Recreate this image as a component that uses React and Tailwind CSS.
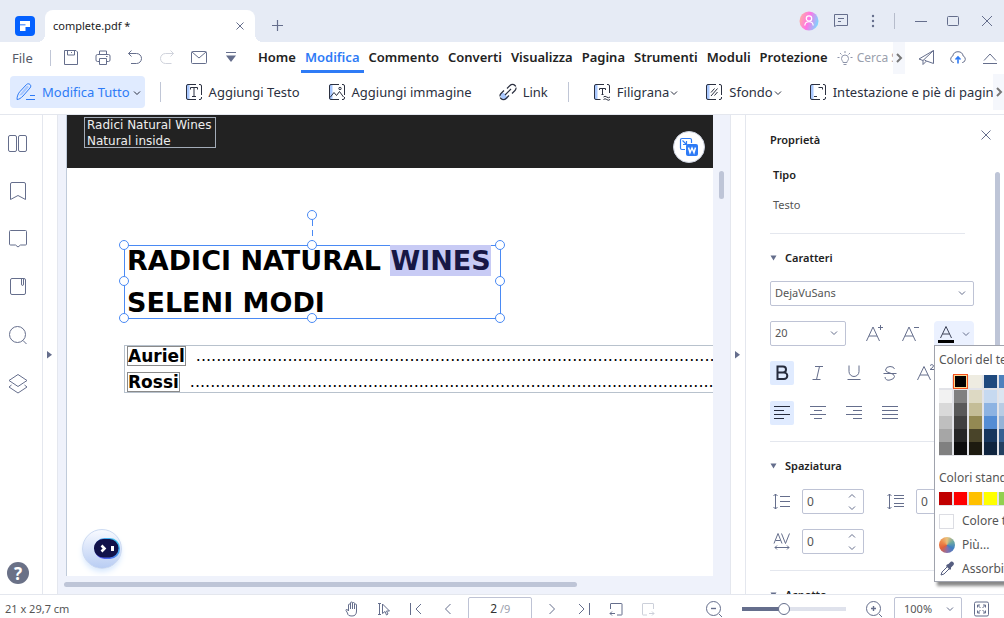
import React from "react";

const TABS = ["Home", "Modifica", "Commento", "Converti", "Visualizza", "Pagina", "Strumenti", "Moduli", "Protezione"];

const THEME_COLORS = [
  ["#ffffff", "#f2f2f2", "#d9d9d9", "#bfbfbf", "#a6a6a6", "#808080"],
  ["#000000", "#808080", "#595959", "#404040", "#262626", "#0d0d0d"],
  ["#eeece1", "#ddd9c3", "#c4bd97", "#938953", "#494429", "#1d1b10"],
  ["#1f497d", "#c6d9f0", "#8db3e2", "#548dd4", "#17365d", "#0f243e"],
  ["#4f81bd", "#dbe5f1", "#b8cce4", "#95b3d7", "#366092", "#244061"],
  ["#c0504d", "#f2dcdb", "#e5b9b7", "#d99694", "#953734", "#632423"],
];

const STANDARD_COLORS = ["#c00000", "#ff0000", "#ffc000", "#ffff00", "#92d050", "#00b050"];

const HANDLES = [
  "-left-[6px] -top-[6px]",
  "left-1/2 -ml-[6px] -top-[6px]",
  "-right-[5px] -top-[6px]",
  "-left-[6px] top-1/2 -mt-[6px]",
  "-right-[5px] top-1/2 -mt-[6px]",
  "-left-[6px] -bottom-[5px]",
  "left-1/2 -ml-[6px] -bottom-[5px]",
  "-right-[5px] -bottom-[5px]",
];

function Icon({ size = 20, children, className = "" }) {
  return (
    <svg
      width={size}
      height={size}
      viewBox={`0 0 ${size} ${size}`}
      fill="none"
      stroke="currentColor"
      strokeWidth="1"
      className={`shrink-0 ${className}`}
      aria-hidden="true"
    >
      {children}
    </svg>
  );
}

function IconButton({ label, className = "", children }) {
  return (
    <button type="button" aria-label={label} className={`flex h-6 w-6 shrink-0 items-center justify-center ${className}`}>
      {children}
    </button>
  );
}

function Chevron({ className = "" }) {
  return (
    <svg width="8" height="8" viewBox="0 0 8 8" fill="none" stroke="currentColor" className={`shrink-0 ${className}`} aria-hidden="true">
      <path d="M1 2.500l3 3 3-3" />
    </svg>
  );
}

function Triangle({ down = false }) {
  return (
    <svg width="7" height="8" viewBox="0 0 7 8" fill="#656e8c" className="shrink-0" aria-hidden="true">
      {down ? <path d="M0.500 1.500h6L3.500 6.500z" /> : <path d="M0 0v7.500L5 3.700z" />}
    </svg>
  );
}

function TitleBar() {
  return (
    <header className="flex h-[42px] shrink-0 items-end bg-[#e6ebf5] text-[#656e8c]">
      <svg width="20" height="20" viewBox="0 0 20 20" className="mb-[6px] ml-[15px] shrink-0" aria-hidden="true">
        <rect width="20" height="20" rx="4" fill="#0461ff" />
        <path d="M5 5h10v6h-4.500v4H5z" fill="#fff" />
        <path d="M5 8h5.500v1.500H5z" fill="#6aa2ff" />
      </svg>
      <div className="relative ml-[10px] flex h-8 w-[210px] items-center rounded-t-lg bg-white pl-2 pr-[10px] before:absolute before:-left-2 before:bottom-0 before:h-2 before:w-2 before:bg-[radial-gradient(circle_at_0_0,#e6ebf5_8px,white_8px)] after:absolute after:-right-2 after:bottom-0 after:h-2 after:w-2 after:bg-[radial-gradient(circle_at_100%_0,#e6ebf5_8px,white_8px)]">
        <span className="flex-1 text-[11px] text-[#222]">complete.pdf *</span>
        <button type="button" aria-label="Chiudi scheda">
          <Icon size={10}><path d="M1.500 1.500l7 7M8.500 1.500l-7 7" /></Icon>
        </button>
      </div>
      <button type="button" aria-label="Nuova scheda" className="mb-[10px] ml-4">
        <Icon size={13}><path d="M6.500 1v11M1 6.500h11" strokeWidth="1.200" /></Icon>
      </button>
      <div className="ml-auto flex h-[42px] items-center">
        <button type="button" aria-label="Account" className="mr-[10px]">
          <svg width="20" height="20" viewBox="0 0 20 20" fill="none">
            <defs>
              <linearGradient id="avatar" x1="0" y1="0.200" x2="1" y2="0.500">
                <stop offset="0" stopColor="#ffb0a0" />
                <stop offset="0.500" stopColor="#ff74e6" />
                <stop offset="1" stopColor="#7fd4ff" />
              </linearGradient>
            </defs>
            <circle cx="10" cy="10" r="9.500" fill="url(#avatar)" />
            <circle cx="10" cy="7.500" r="2.700" stroke="#fff" strokeWidth="1.200" />
            <path d="M5.800 14.500c.3-5 8.100-5 8.400 0" stroke="#fff" strokeWidth="1.200" />
          </svg>
        </button>
        <IconButton label="Messaggi">
          <Icon size={16}>
            <path d="M1.500 13.500v-12h13v11h-11z" strokeLinejoin="round" />
            <path d="M5 5.500h6M5 8.500h3" />
          </Icon>
        </IconButton>
        <IconButton label="Altro" className="ml-2">
          <Icon size={14}>
            <g fill="currentColor" stroke="none">
              <circle cx="7" cy="2" r="1.200" /><circle cx="7" cy="7" r="1.200" /><circle cx="7" cy="12" r="1.200" />
            </g>
          </Icon>
        </IconButton>
        <span className="ml-[9px] h-4 w-px bg-[#b6bccb]" />
        <IconButton label="Riduci" className="ml-[14px]"><Icon size={12}><path d="M0 6.500h12" /></Icon></IconButton>
        <IconButton label="Ingrandisci" className="ml-2"><Icon size={12}><rect x="0.500" y="1.500" width="11" height="9" rx="1" /></Icon></IconButton>
        <IconButton label="Chiudi" className="ml-[10px] mr-[5px]"><Icon size={12}><path d="M1 1l10 10M11 1L1 11" /></Icon></IconButton>
      </div>
    </header>
  );
}

function MenuBar() {
  return (
    <nav className="flex h-8 shrink-0 items-center text-[#656e8c]">
      <button type="button" className="ml-3 w-[38px] pt-[2px] text-left text-[13px] text-[#555a68]">File</button>
      <span className="h-4 w-px bg-[#c0c6d6]" />
      <div className="ml-2 flex items-center gap-2">
        <IconButton label="Salva">
          <Icon size={16}><path d="M1.500 .500h11.500l1.500 1.500v12.500h-13zM4.500 .500v4.500h7v-4.500M8.500 2v1" strokeLinejoin="round" /></Icon>
        </IconButton>
        <IconButton label="Stampa">
          <Icon size={16}><path d="M4.500 4.500v-3.500h7v3.500M4 11.500H2.500q-1.500 0-1.500-1.500V6q0-1.500 1.500-1.500h11q1.500 0 1.500 1.500v4q0 1.500-1.500 1.500H12M4.500 8.500h7v6h-7zM11 6.500h1.500" /></Icon>
        </IconButton>
        <IconButton label="Annulla">
          <Icon size={16}><path d="M4.500 .500l-3 3 3 3M1.500 3.500h8a5 5 0 0 1 0 10H4" /></Icon>
        </IconButton>
        <IconButton label="Ripeti" className="text-[#d0d3dc]">
          <Icon size={16}><path d="M11.500 .500l3 3-3 3M14.500 3.500H6.500a5 5 0 0 0 0 10h6" /></Icon>
        </IconButton>
        <IconButton label="E-mail">
          <Icon size={16}><rect x="0.500" y="1.500" width="15" height="12" rx="1" /><path d="M1 2l7 6 7-6" /></Icon>
        </IconButton>
        <IconButton label="Personalizza">
          <Icon size={12}><path d="M1 .500h10" /><path d="M1 3.500h10l-5 6.500z" fill="currentColor" stroke="none" /></Icon>
        </IconButton>
      </div>
      <div className="flex h-full min-w-0 flex-1 items-center gap-px overflow-hidden pl-[11px]">
        {TABS.map((tab) => (
          <button
            key={tab}
            type="button"
            className={
              tab === "Modifica"
                ? "h-[30px] shrink-0 border-b-[3px] border-[#2e7bf6] px-1 pt-[3px] text-[13px] font-semibold text-[#2e7bf6]"
                : "h-[30px] shrink-0 border-b-[3px] border-transparent px-1 pt-[3px] text-[13px] font-semibold text-[#222]"
            }
          >
            {tab}
          </button>
        ))}
        <label className="ml-1 flex shrink-0 items-center gap-1 text-[12px] text-[#9aa0ad]">
          <Icon size={16} className="text-[#8e95aa]">
            <path d="M6 12.500c0-1.500-1.500-2-1.500-4a3.500 3.500 0 0 1 7 0c0 2-1.500 2.500-1.500 4zM6.500 14.500h3M8 1v2M3 3l1.500 1.500M13 3l-1.500 1.500M.500 7.500h2M13.500 7.500h2" />
          </Icon>
          <input type="text" placeholder="Cerca Strumenti" aria-label="Cerca Strumenti" className="w-[100px] outline-none placeholder:text-[#9aa0ad]" />
        </label>
      </div>
      <button type="button" aria-label="Scorri menu" className="flex h-8 w-3 items-center justify-center bg-[#f5f7fc] text-[#777]">
        <Icon size={10}><path d="M3 1l4 4-4 4" strokeWidth="2" /></Icon>
      </button>
      <IconButton label="Condividi" className="ml-[9px]">
        <Icon size={16}><path d="M15.500 .500L1 9l4 1.500L15.500 .500v13L8.500 11M5 10.500v4L8.500 11 6.500 10" strokeLinejoin="round" /></Icon>
      </IconButton>
      <IconButton label="Cloud" className="ml-2">
        <Icon size={18}>
          <path d="M5 13.500H4.500a3.400 3.400 0 0 1-.7-6.500 5.300 5.300 0 0 1 10.400 0 3.400 3.400 0 0 1-.7 6.500H13" />
          <path d="M9 14.500V8.500M6.500 10.500L9 8l2.500 2.500" stroke="#2e7bf6" strokeWidth="1.600" />
        </Icon>
      </IconButton>
      <IconButton label="Comprimi" className="ml-2 mr-[2px]">
        <Icon size={16}><path d="M2 10.500L8 4l6 6.500M1 13.500h14" /></Icon>
      </IconButton>
    </nav>
  );
}

function Tool({ label, chevron = false, className = "", children }) {
  return (
    <button type="button" className={`flex h-8 shrink-0 items-center ${className}`}>
      {children}
      <span className="ml-[6px] pt-px text-[13px]">{label}</span>
      {chevron && <Chevron className="ml-px mt-px" />}
    </button>
  );
}

function FrameIcon({ children }) {
  return (
    <Icon size={18}>
      <path d="M1.500 1.500h3v15h-3z" fill="#a9c8ff" stroke="none" />
      <path d="M11 1.500H3Q1.500 1.500 1.500 3v12q0 1.500 1.500 1.500h8M14 1.500h1q1.500 0 1.500 1.500v9M16.500 14v1q0 1.500-1.500 1.500h-1" />
      {children}
    </Icon>
  );
}

function ToolBar() {
  return (
    <div className="flex h-[41px] shrink-0 border-b border-[#e4e7ee] pl-[10px] text-[#2b3040]">
      <div className="flex min-w-0 flex-1 overflow-hidden pt-[2px]">
        <button type="button" className="flex h-8 shrink-0 items-center rounded bg-[#e0ebff] pl-[6px] pr-1 text-[#2e7bf6]">
          <Icon size={20}>
            <path d="M1 17.500c0-3 1-6 3-8l6.500-7c2-2 6 .5 3.500 3.500l-7 8c-2 2-4 3.500-6 3.500z" />
            <path d="M3 13.500l8-10 2 1.500-7 8z" fill="#a9c8ff" stroke="none" />
            <path d="M10 17.500h9M14 13.500h5" />
          </Icon>
          <span className="ml-[6px] pt-px text-[13px]">Modifica Tutto</span>
          <Chevron className="ml-[3px] mt-px text-[#2b3040]" />
        </button>
        <span className="ml-[15px] mt-[6px] h-5 w-px shrink-0 bg-[#c0c6d6]" />
        <Tool label="Aggiungi Testo" className="ml-6">
          <FrameIcon><path d="M5.500 6.500v-2h7v2M9 4.500v9M7 13.500h4" /></FrameIcon>
        </Tool>
        <Tool label="Aggiungi immagine" className="ml-7">
          <FrameIcon><path d="M2 14.500l4-5 2.500 3 3-4 4 5.500" /><circle cx="12" cy="5.500" r="1.200" /></FrameIcon>
        </Tool>
        <Tool label="Link" className="ml-[27px]">
          <Icon size={18}>
            <path d="M2 10c-2 4 2 8 6 6l1-1-4-5z" fill="#a9c8ff" stroke="none" />
            <path d="M8 5.500l3-3a3.500 3.500 0 0 1 5 5l-3 3M10 12.500l-3 3a3.500 3.500 0 0 1-5-5l3-3M6 12l6-6" strokeWidth="1.200" strokeDasharray="11 1" />
          </Icon>
        </Tool>
        <span className="ml-5 mt-[6px] h-5 w-px shrink-0 bg-[#c0c6d6]" />
        <Tool label="Filigrana" chevron className="ml-6">
          <Icon size={18}>
            <path d="M1.500 1.500h3v15h-3z" fill="#a9c8ff" stroke="none" />
            <path d="M7.500 16.500H3q-1.500 0-1.500-1.500V3Q1.500 1.500 3 1.500h8M14 1.500h1q1.500 0 1.500 1.500v7M6.500 7V5.500h6V7M9.500 5.500v6M8.500 11.500h2" />
            <path d="M10.500 14q1.500-1.500 3.200 0t3.300 0M10.500 16.500q1.500-1.500 3.200 0t3.300 0" />
          </Icon>
        </Tool>
        <Tool label="Sfondo" chevron className="ml-[27px]">
          <FrameIcon><path d="M6 9.500l3.500-4M6 13l6.500-7.500M9.500 12.500L12.500 9" /></FrameIcon>
        </Tool>
        <Tool label="Intestazione e piè di pagina" className="ml-[27px]">
          <FrameIcon><path d="M9.500 4.500h4v2M5 13.500h3" /></FrameIcon>
        </Tool>
      </div>
      <button type="button" aria-label="Scorri strumenti" className="flex h-9 w-[11px] items-center justify-center bg-[#f5f7fc] text-[#777]">
        <Icon size={10}><path d="M3 1l4 4-4 4" strokeWidth="2" /></Icon>
      </button>
    </div>
  );
}

function SideBar() {
  return (
    <aside className="flex w-[43px] shrink-0 flex-col items-start border-r border-[#e4e7ee] pb-[10px] pl-[6px] pt-[17px] text-[#656e8c]">
      <div className="flex flex-col gap-6">
        <IconButton label="Miniature"><Icon><rect x="0.500" y="1.500" width="8" height="16" rx="1.500" /><rect x="10.500" y="1.500" width="8" height="16" rx="1.500" /></Icon></IconButton>
        <IconButton label="Segnalibri"><Icon><path d="M2.500 17.500V2q0-1.500 1.500-1.500h12q1.500 0 1.500 1.500v15.500L10 13.500z" /></Icon></IconButton>
        <IconButton label="Commenti"><Icon><path d="M2.500 .500h15q1 0 1 1v12.500q0 1-1 1h-5l-2.500 2-2.500-2h-5q-1 0-1-1v-12.500q0-1 1-1z" /></Icon></IconButton>
        <IconButton label="Allegati"><Icon><rect x="2.500" y="0.500" width="15" height="16" rx="1.500" /><path d="M13.500 .500V6q0 1.500 1 1.500t1-1.500V.500" /></Icon></IconButton>
        <IconButton label="Cerca"><Icon><circle cx="9.500" cy="8.500" r="8" /><path d="M15 14.500l3.500 3.500" /></Icon></IconButton>
        <IconButton label="Livelli"><Icon><path d="M10 .500l9 6-9 6-9-6z" /><path d="M3.500 11L1 13l9 6 9-6-2.500-2" /></Icon></IconButton>
      </div>
      <button type="button" aria-label="Aiuto" className="ml-px mt-auto flex h-[22px] w-[22px] items-center justify-center rounded-full bg-[#6a7187] text-[17px] font-bold leading-none text-white">
        ?
      </button>
    </aside>
  );
}

function DocumentPage() {
  return (
    <div className="relative min-w-0 flex-1 overflow-hidden border-l border-[#c0cbda] bg-white font-['DejaVu_Sans','Liberation_Sans',sans-serif]">
      <div className="h-[53px] bg-[#222] pl-[17px] pt-[2px]">
        <p className="h-[31px] w-[132px] pl-[3px] text-[12px] leading-4 text-[#eee] ring-1 ring-inset ring-[#a3acb8]">
          Radici Natural Wines
          <br />
          Natural inside
        </p>
      </div>
      <div className="relative ml-[57px] mt-[77px] h-[74px] w-[377px] border border-[#4a8af4] pl-[2px]">
        <h1 className="-mt-[6px] whitespace-nowrap text-[27px] font-bold leading-[42px] text-black">
          RADICI NATURAL <span className="bg-[#c8cbf5] text-[#171745]">WINES</span>
          <br />
          SELENI MODI
        </h1>
        <span className="absolute -top-[26px] left-1/2 -ml-px h-[26px] w-px bg-[repeating-linear-gradient(to_top,#4a8af4_0_6px,transparent_6px_10px)]" />
        <span className="absolute -top-9 left-1/2 -ml-[6px] h-[10px] w-[10px] rounded-full border border-[#4a8af4] bg-white" />
        {HANDLES.map((place) => (
          <span key={place} className={`absolute h-[10px] w-[10px] rounded-full border border-[#4a8af4] bg-white ${place}`} />
        ))}
      </div>
      <div className="ml-[57px] mt-[26px] flex h-12 flex-col justify-between overflow-hidden border-y border-l border-[#b8c2cd] pl-[2px] text-black">
        {["Auriel", "Rossi"].map((name) => (
          <div key={name} className="flex h-5 items-center whitespace-nowrap">
            <span className="h-5 border border-[#8a8a8a] text-[17px] font-bold leading-[18px]">{name}</span>
            <span className="ml-[10px] text-[16px] leading-5">{".".repeat(140)}</span>
          </div>
        ))}
      </div>
      <button type="button" aria-label="Converti in Word" className="absolute right-2 top-4 flex h-8 w-8 items-center justify-center rounded-full border border-[#ccd2e0] bg-white">
        <svg width="20" height="20" viewBox="0 0 20 20" fill="none" stroke="#2e7bf6">
          <path d="M6 12.500H3q-1.500 0-1.500-1.500V3Q1.500 1.500 3 1.500h8q1.500 0 1.500 1.500v3M3.500 3.500l3.500 3.500M7.500 4v3.500H4" strokeWidth="1.200" />
          <rect x="7" y="7" width="12" height="12" rx="2" fill="#2e7bf6" stroke="none" />
          <path d="M9.500 10.500l1.500 5 2-4.500 2 4.500 1.500-5" stroke="#fff" strokeWidth="1.500" />
        </svg>
      </button>
      <button type="button" aria-label="Assistente" className="absolute bottom-[7px] left-[15px] h-10 w-10 rounded-full border border-[#ccdaf2] bg-linear-to-b from-[#f8faff] to-[#b9cdf3] shadow-md shadow-blue-100">
        <svg width="38" height="38" viewBox="0 0 38 38">
          <defs>
            <linearGradient id="visor" x1="0" y1="1" x2="1" y2="0">
              <stop offset="0" stopColor="#5440ee" />
              <stop offset="1" stopColor="#3fd8f0" />
            </linearGradient>
          </defs>
          <rect x="11.500" y="8" width="25.500" height="21" rx="10" fill="url(#visor)" />
          <rect x="11" y="9" width="24.500" height="18.500" rx="9" fill="#12124a" />
          <path d="M18.500 15.500l3 3-3 3" fill="none" stroke="#fff" strokeWidth="2.600" />
          <rect x="28" y="16" width="3" height="5" fill="#fff" />
        </svg>
      </button>
    </div>
  );
}

function Canvas() {
  return (
    <main className="flex min-w-0 flex-1 flex-col border-x border-[#e4e7ee] bg-[#eff2fb]">
      <div className="flex min-h-0 flex-1 pl-2">
        <DocumentPage />
        <div className="w-[17px] shrink-0 pl-[6px] pt-14">
          <div className="h-7 w-[5px] rounded-full bg-[#bec5d7]" />
        </div>
      </div>
      <div className="h-[18px] shrink-0 pl-[6px] pt-[6px]">
        <div className="h-[5px] w-[77%] rounded-full bg-[#bec5d7]" />
      </div>
    </main>
  );
}

function Select({ label, value, className = "" }) {
  return (
    <div className={`relative h-[25px] shrink-0 ${className}`}>
      <select aria-label={label} className="h-full w-full appearance-none rounded-[2px] border border-[#bec3d5] bg-white pl-1 text-[11px] text-[#555]">
        <option>{value}</option>
      </select>
      <Chevron className="pointer-events-none absolute right-2 top-2 text-[#656e8c]" />
    </div>
  );
}

function Stepper({ label, children }) {
  return (
    <div className="flex items-center gap-2 text-[#656e8c]">
      <IconButton label={label}>{children}</IconButton>
      <div className="flex h-[25px] w-[62px] items-center rounded-[2px] border border-[#bec3d5] bg-white">
        <input type="text" aria-label={label} defaultValue="0" className="w-[45px] pl-1 text-[12px] text-[#555] outline-none" />
        <div className="flex flex-col gap-1">
          <button type="button" aria-label={`${label} aumenta`}><Chevron className="rotate-180" /></button>
          <button type="button" aria-label={`${label} riduci`}><Chevron /></button>
        </div>
      </div>
    </div>
  );
}

function Section({ title }) {
  return (
    <h3 className="flex h-5 items-center gap-2 text-[11px] font-semibold text-[#222]">
      <Triangle down />
      {title}
    </h3>
  );
}

function ColorMenu() {
  return (
    <div className="absolute left-0 top-6 z-10 h-[237px] w-[190px] border border-[#a0a3ad] bg-white pl-1 pt-1 text-[12px] text-[#555] shadow-[3px_4px_3px_#888]">
      <p className="h-5 whitespace-nowrap leading-5">Colori del tema</p>
      <div className="mt-[5px] flex w-max bg-[#e2e3e8] pb-px">
        {THEME_COLORS.map((column, index) => (
          <div key={column[0]} className="mr-[2px] flex w-[13px] flex-col">
            {column.map((color, row) => (
              <button
                key={color + row}
                type="button"
                aria-label={color}
                style={{ backgroundColor: color }}
                className={
                  row > 0
                    ? "h-[13px] w-[13px]"
                    : index === 1
                      ? "mb-[2px] h-[13px] w-[13px] outline-1 outline-[#f4511e] ring-1 ring-inset ring-[#ffd58a]"
                      : "mb-[2px] h-[13px] w-[13px]"
                }
              />
            ))}
          </div>
        ))}
      </div>
      <p className="mt-3 h-5 whitespace-nowrap leading-5">Colori standard</p>
      <div className="mt-1 flex w-max gap-[2px] bg-[#e2e3e8] pb-px">
        {STANDARD_COLORS.map((color) => (
          <button key={color} type="button" aria-label={color} style={{ backgroundColor: color }} className="h-[13px] w-[13px]" />
        ))}
      </div>
      <div className="mt-[3px] flex flex-col">
        <button type="button" className="flex h-6 items-center gap-2 whitespace-nowrap">
          <span className="h-[15px] w-[15px] border border-[#dcdde3]" />
          Colore trasparente
        </button>
        <button type="button" className="flex h-6 items-center gap-[7px] whitespace-nowrap">
          <span className="h-4 w-4 rounded-full bg-[conic-gradient(#eac27d,#6faaa0,#3f7fc4,#8a6fa8,#e2603a,#ee8a4a,#eac27d)]" />
          Più...
        </button>
        <button type="button" className="flex h-6 items-center gap-[7px] whitespace-nowrap">
          <Icon size={16} className="text-[#565e80]">
            <path d="M2 14l1-3 6-6 2 2-6 6z" />
            <path d="M8 3.500l1.500-.500L12 .500Q13.500 0 14.500 1.500q1 1 0 2.500L12 6.500 12 8l-1 1L7 5z" fill="currentColor" stroke="none" />
          </Icon>
          Assorbitore
        </button>
      </div>
    </div>
  );
}

function Properties() {
  return (
    <aside className="relative w-[259px] shrink-0 overflow-hidden border-l border-[#e4e7ee] pl-6 text-[11px] text-[#656e8c]">
      <div className="flex h-10 justify-between pr-[6px]">
        <h2 className="mt-[15px] h-5 font-semibold leading-5 text-[#222]">Proprietà</h2>
        <IconButton label="Chiudi pannello" className="mt-2">
          <Icon size={12}><path d="M1.500 1.500l9 9M10.500 1.500l-9 9" /></Icon>
        </IconButton>
      </div>
      <h3 className="mt-[10px] h-5 pl-[3px] font-semibold leading-5 text-[#222]">Tipo</h3>
      <p className="mt-[10px] h-5 pl-[3px] leading-5 text-[#555]">Testo</p>
      <hr className="mr-[39px] mt-[18px] border-[#e4e7ee]" />
      <div className="mt-[14px]"><Section title="Caratteri" /></div>
      <Select label="Carattere" value="DejaVuSans" className="mt-[13px] w-[204px]" />
      <div className="mt-[15px] flex items-center">
        <Select label="Dimensione" value="20" className="w-[76px]" />
        <IconButton label="Aumenta dimensione" className="ml-4"><Icon><path d="M2.500 17L9 3l6.500 14M5 12h8M16.500 1v5M14 3.500h5" /></Icon></IconButton>
        <IconButton label="Riduci dimensione" className="ml-3"><Icon><path d="M2.500 17L9 3l6.500 14M5 12h8M14 3.500h5" /></Icon></IconButton>
        <div className="relative ml-3">
          <button type="button" aria-label="Colore del testo" className="flex h-[25px] w-10 items-center rounded-t bg-[#ebf1ff] pl-[2px]">
            <Icon className="text-[#3c4257]"><path d="M4.500 14l5.500-11.500L15.500 14M6.500 10h7" /><rect x="2.500" y="16.500" width="15" height="2" fill="#000" stroke="#000" /></Icon>
            <Chevron className="ml-[6px]" />
          </button>
          <ColorMenu />
        </div>
      </div>
      <div className="mt-[15px] flex gap-3">
        <IconButton label="Grassetto" className="rounded-[2px] bg-[#e0ebff] text-[#252b3d]"><Icon size={16}><path d="M3.500 1.500h5.500a3 3 0 0 1 0 6H3.500zM3.500 7.500H10a3.300 3.300 0 0 1 0 6.600H3.500z" strokeWidth="2" /></Icon></IconButton>
        <IconButton label="Corsivo"><Icon size={16}><path d="M5 1.500h8M2.500 14.500h8M9.500 1.500l-3 13" /></Icon></IconButton>
        <IconButton label="Sottolineato"><Icon size={16}><path d="M3 .500v6a5 5 0 0 0 10 0v-6M1.500 14.500h13" /></Icon></IconButton>
        <IconButton label="Barrato"><Icon size={16}><path d="M12.500 4q-.5-2.500-4.500-2.500T3.500 5q0 2 4.500 3t4.500 3.500-4.500 3.500-5-3M1.500 8.500h13" /></Icon></IconButton>
        <IconButton label="Apice"><Icon><path d="M1.500 17L8 3.500 14.500 17M4 12h8M14 2.500q2-2 3.500 0 .5 1.500-3.500 4h4.500" /></Icon></IconButton>
      </div>
      <div className="mt-4 flex gap-3">
        <IconButton label="Allinea a sinistra" className="rounded-[2px] bg-[#e0ebff] text-[#252b3d]"><Icon size={18}><path d="M1 2.500h16M1 6.500h10M1 10.500h16M1 14.500h10" /></Icon></IconButton>
        <IconButton label="Centra"><Icon size={18}><path d="M1 2.500h16M5 6.500h8M1 10.500h16M5 14.500h8" /></Icon></IconButton>
        <IconButton label="Allinea a destra"><Icon size={18}><path d="M1 2.500h16M8 6.500h9M1 10.500h16M8 14.500h9" /></Icon></IconButton>
        <IconButton label="Giustifica"><Icon size={18}><path d="M1 2.500h16M1 6.500h16M1 10.500h16M1 14.500h16" /></Icon></IconButton>
      </div>
      <hr className="mr-[39px] mt-4 border-[#e4e7ee]" />
      <div className="mt-[14px]"><Section title="Spaziatura" /></div>
      <div className="mt-[13px] flex gap-5">
        <Stepper label="Interlinea"><Icon size={18}><path d="M2.500 1v15M.500 3l2-2 2 2M.500 14l2 2 2-2M7 3.500h10M7 8.500h10M7 13.500h10" /></Icon></Stepper>
        <Stepper label="Spaziatura paragrafo"><Icon size={18}><path d="M2.500 1v15M.500 3l2-2 2 2M.500 14l2 2 2-2M7 2.500h10M7 5.500h10M7 10.500h10M7 13.500h10" /></Icon></Stepper>
      </div>
      <div className="mt-[15px] flex">
        <Stepper label="Spaziatura caratteri"><Icon size={18}><path d="M1 10.500L5 .500 9 10.500M2.500 7.500h5M8.500 .500l4 10 4-10M2 14.500h14M4 12.500l-2 2 2 2M14 12.500l2 2-2 2" /></Icon></Stepper>
      </div>
      <hr className="mr-[39px] mt-4 border-[#e4e7ee]" />
      <div className="mt-[14px]"><Section title="Aspetto" /></div>
      <div className="absolute right-1 top-[57px] h-[330px] w-[5px] rounded-full bg-[#bec5d7]" />
    </aside>
  );
}

function StatusBar() {
  return (
    <footer className="h-6 shrink-0 overflow-hidden border-t border-[#e4e7ee] text-[11px] text-[#656e8c]">
      <div className="flex h-7 items-center gap-2 pl-[5px] pr-[10px]">
        <span className="flex-1 text-[#555]">21 x 29,7 cm</span>
        <IconButton label="Mano">
          <Icon size={16}><path d="M4.500 10V4q0-1 1-1t1 1v4V2q0-1 1-1t1 1v6V2.500q0-1 1-1t1 1V8 4q0-1 1-1t1 1v6q0 5-4.500 5T3.500 12L2 9.500q0-1.500 1-1t1.500 1.500" /></Icon>
        </IconButton>
        <IconButton label="Selezione"><Icon size={16}><path d="M2 2.500h3M3.500 2.500v11M2 13.500h3M6.500 3v9.500l2.500-2 1.500 3.500 1.500-1-1.500-3h3z" /></Icon></IconButton>
        <IconButton label="Prima pagina"><Icon size={14}><path d="M1.500 1v12M12 2L7 7l5 5" /></Icon></IconButton>
        <IconButton label="Pagina precedente"><Icon size={14}><path d="M9.500 2l-5 5 5 5" /></Icon></IconButton>
        <label className="flex h-6 w-16 items-center rounded-[2px] border border-[#bec3d5]">
          <input type="text" aria-label="Pagina" defaultValue="2" className="w-7 text-right text-[12px] text-[#333] outline-none" />
          <span className="ml-[3px] text-[#9aa0ad]">/9</span>
        </label>
        <IconButton label="Pagina successiva"><Icon size={14}><path d="M4.500 2l5 5-5 5" /></Icon></IconButton>
        <IconButton label="Ultima pagina"><Icon size={14}><path d="M12.500 1v12M2 2l5 5-5 5" /></Icon></IconButton>
        <IconButton label="Vista precedente"><Icon size={14}><path d="M1.500 7V2q0-.500.500-.500h10.500q.500 0 .500.500v10.500q0 .500-.500.500H8M1 11.500h5M3 9.500l-2 2 2 2" /></Icon></IconButton>
        <IconButton label="Vista successiva" className="text-[#ccd0da]"><Icon size={14}><path d="M12.500 7V2q0-.500-.500-.500H2q-.500 0-.500.500v10.500q0 .500.500.500H6M8 11.500h5M11 9.500l2 2-2 2" /></Icon></IconButton>
        <IconButton label="Riduci zoom" className="ml-[34px]"><Icon size={18}><circle cx="8.500" cy="8.500" r="7" /><path d="M14 14l3 3" /><path d="M6 8.500h5" strokeWidth="1.400" /></Icon></IconButton>
        <input
          type="range"
          aria-label="Zoom"
          min="0"
          max="100"
          defaultValue="39"
          className="mx-2 h-1 w-[104px] appearance-none bg-linear-to-r from-[#656e8c] from-40% to-[#dfe2ec] to-40% [&::-webkit-slider-thumb]:h-3 [&::-webkit-slider-thumb]:w-3 [&::-webkit-slider-thumb]:appearance-none [&::-webkit-slider-thumb]:rounded-full [&::-webkit-slider-thumb]:border [&::-webkit-slider-thumb]:border-[#656e8c] [&::-webkit-slider-thumb]:bg-white"
        />
        <IconButton label="Aumenta zoom"><Icon size={18}><circle cx="8.500" cy="8.500" r="7" /><path d="M14 14l3 3" /><path d="M6 8.500h5M8.500 6v5" strokeWidth="1.400" /></Icon></IconButton>
        <div className="relative h-6 w-[68px]">
          <select aria-label="Livello di zoom" className="h-full w-full appearance-none rounded-[2px] border border-[#bec3d5] bg-white pl-[9px] text-[11px] text-[#555]">
            <option>100%</option>
          </select>
          <Chevron className="pointer-events-none absolute right-2 top-2" />
        </div>
        <IconButton label="Schermo intero"><Icon size={16}><rect x="0.500" y="1" width="14" height="14" rx="1.500" /><path d="M3.500 6.500V4H6M9 4h2.500v2.500M11.500 9.500V12H9M6 12H3.500V9.500M3.500 4l3 3M11.500 4l-3 3M11.500 12l-3-3M3.500 12l3-3" /></Icon></IconButton>
      </div>
    </footer>
  );
}

export default function App() {
  return (
    <div className="flex h-screen flex-col overflow-hidden bg-white font-['Noto_Sans','Open_Sans',sans-serif]">
      <TitleBar />
      <MenuBar />
      <ToolBar />
      <div className="flex min-h-0 flex-1">
        <SideBar />
        <button type="button" aria-label="Espandi pannello sinistro" className="flex w-[14px] shrink-0 items-center justify-center">
          <Triangle />
        </button>
        <Canvas />
        <button type="button" aria-label="Comprimi pannello destro" className="flex w-[14px] shrink-0 items-center justify-center">
          <Triangle />
        </button>
        <Properties />
      </div>
      <StatusBar />
    </div>
  );
}
